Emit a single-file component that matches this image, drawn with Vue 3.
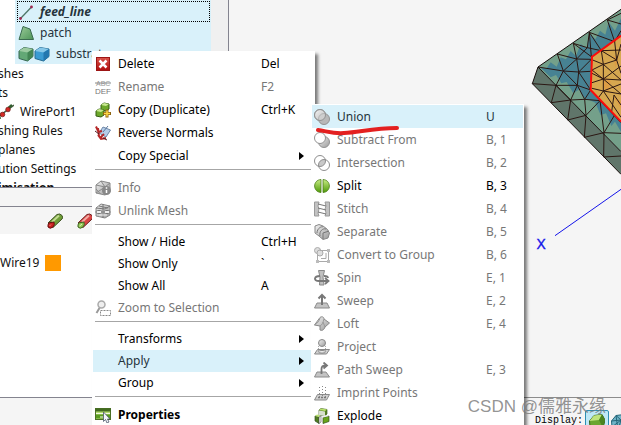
<script setup>
import { ref } from 'vue'

const treeNodes = [
    { id: 1, text: 'feed_line', icons: ['wire'], current: true },
    { id: 2, text: 'patch', icons: ['face'] },
    { id: 3, text: 'substrate', icons: ['cube-green', 'cube-blue'] },
]

const treeGroups = [
    { id: 1, text: 'shes' },
    { id: 2, text: 'ts' },
    { id: 3, text: 'WirePort1', icon: 'port' },
    { id: 4, text: 'shing Rules' },
    { id: 5, text: 'planes' },
    { id: 6, text: 'ution Settings' },
    { id: 7, text: 'imisation', bold: true },
]

const menuGroups = [
    [
        { text: 'Delete', key: 'Del', icon: 'delete' },
        { text: 'Rename', key: 'F2', icon: 'rename', disabled: true },
        { text: 'Copy (Duplicate)', key: 'Ctrl+K', icon: 'copy' },
        { text: 'Reverse Normals', icon: 'reverse' },
        { text: 'Copy Special', sub: true },
    ],
    [
        { text: 'Info', icon: 'info', disabled: true },
        { text: 'Unlink Mesh', icon: 'mesh', disabled: true },
    ],
    [
        { text: 'Show / Hide', key: 'Ctrl+H', low: true },
        { text: 'Show Only', key: '`', low: true },
        { text: 'Show All', key: 'A', low: true },
        { text: 'Zoom to Selection', icon: 'zoom', disabled: true, low: true },
    ],
    [
        { text: 'Transforms', sub: true, low: true },
        { text: 'Apply', sub: true, low: true },
        { text: 'Group', sub: true, low: true },
    ],
    [
        { text: 'Properties', icon: 'properties', bold: true },
    ],
]

const applyItems = [
    { text: 'Union', key: 'U', icon: 'union' },
    { text: 'Subtract From', key: 'B, 1', icon: 'subtract', disabled: true },
    { text: 'Intersection', key: 'B, 2', icon: 'intersection', disabled: true },
    { text: 'Split', key: 'B, 3', icon: 'split' },
    { text: 'Stitch', key: 'B, 4', icon: 'stitch', disabled: true },
    { text: 'Separate', key: 'B, 5', icon: 'separate', disabled: true },
    { text: 'Convert to Group', key: 'B, 6', icon: 'convert', disabled: true },
    { text: 'Spin', key: 'E, 1', icon: 'spin', disabled: true },
    { text: 'Sweep', key: 'E, 2', icon: 'sweep', disabled: true },
    { text: 'Loft', key: 'E, 4', icon: 'loft', disabled: true },
    { text: 'Project', icon: 'project', disabled: true },
    { text: 'Path Sweep', key: 'E, 3', icon: 'pathsweep', disabled: true },
    { text: 'Imprint Points', icon: 'imprint', disabled: true },
    { text: 'Explode', icon: 'explode' },
]

const openItem = ref('Apply')
const activeItem = ref('Union')
</script>

<template>
    <div class="app">
        <svg class="symbols" width="0" height="0" aria-hidden="true">
            <defs>
                <linearGradient id="g-gray" x1="0" y1="0" x2="1" y2="1">
                    <stop offset="0" stop-color="#f2f2f2" /><stop offset="1" stop-color="#9a9a9a" />
                </linearGradient>
                <linearGradient id="g-green" x1="0" y1="0" x2="0" y2="1">
                    <stop offset="0" stop-color="#c8ec84" /><stop offset="1" stop-color="#4f9a08" />
                </linearGradient>
                <linearGradient id="g-red" x1="0" y1="0" x2="0" y2="1">
                    <stop offset="0" stop-color="#d9534a" /><stop offset="1" stop-color="#b00d0d" />
                </linearGradient>
                <linearGradient id="g-face" x1="0" y1="0" x2="1" y2="1">
                    <stop offset="0" stop-color="#9ccc9a" /><stop offset="1" stop-color="#4c9458" />
                </linearGradient>
            </defs>

            <symbol id="i-wire" viewBox="0 0 16 16">
                <path d="M2.5 14.5 13.5 3" stroke="#4d7668" stroke-width="1.3" />
                <circle cx="2.5" cy="14.5" r="1.4" fill="#a02850" /><circle cx="13.5" cy="3" r="1.4" fill="#a02850" />
            </symbol>
            <symbol id="i-face" viewBox="0 0 16 16">
                <path d="M5 1.5 12 4 15.5 14.5H1Z" fill="url(#g-face)" stroke="#3b6b50" stroke-linejoin="round" />
            </symbol>
            <symbol id="i-cube-green" viewBox="0 0 16 16">
                <path d="M1 5 6 1.5 15 3V10.5L9.5 15 1 12.5Z" fill="#63a876" stroke="#356650" stroke-linejoin="round" />
                <path d="M1 5 6 1.5 15 3 9.5 6.5Z" fill="#9ccba2" /><path d="M9.5 6.5 15 3V10.5L9.5 15Z" fill="#438554" />
            </symbol>
            <symbol id="i-cube-blue" viewBox="0 0 16 16">
                <path d="M1 5 6 1.5 15 3V10.5L9.5 15 1 12.5Z" fill="#3a9bd2" stroke="#276b91" stroke-linejoin="round" />
                <path d="M1 5 6 1.5 15 3 9.5 6.5Z" fill="#86c7e8" /><path d="M9.5 6.5 15 3V10.5L9.5 15Z" fill="#2277af" />
            </symbol>
            <symbol id="i-port" viewBox="0 0 16 16">
                <path d="M0 13 16 1" stroke="#4c6046" stroke-width="1.5" />
                <path d="M0 10 2 15M10.5 4 14 1" stroke="#315e2e" stroke-width="2.5" />
                <circle cx="4.5" cy="10.5" r="2.3" fill="#d32a24" stroke="#6d1515" stroke-width=".7" />
                <circle cx="10" cy="5.5" r="2.3" fill="#d32a24" stroke="#6d1515" stroke-width=".7" />
            </symbol>

            <symbol id="i-delete" viewBox="0 0 16 16">
                <rect x="1.5" y="1.5" width="13" height="13" fill="url(#g-red)" stroke="#9c1515" />
                <path d="M4.5 4.5 11.5 11.5M11.5 4.5 4.5 11.5" stroke="#fff" stroke-width="2.5" />
            </symbol>
            <symbol id="i-rename" viewBox="0 0 16 16">
                <text x="1" y="6.5" font-size="7" fill="#999" font-family="Liberation Sans">ABC</text>
                <path d="M0 4H16" stroke="#888" />
                <text x="0" y="15" font-size="8" fill="#777" font-family="Liberation Sans">DEF</text>
            </symbol>
            <symbol id="i-copy" viewBox="0 0 16 16">
                <path d="M6 3 9 1 14 2V7L11 9 6 8Z" fill="#6da82b" stroke="#355e13" />
                <path d="M6 3 9 1 14 2 11 4Z" fill="#c9e991" />
                <path d="M1 9 4 7 9 8V13L6 15 1 14Z" fill="#6da82b" stroke="#355e13" />
                <path d="M1 9 4 7 9 8 6 10Z" fill="#c9e991" />
                <path d="M12 7.5V15.5M8 11.5H16" stroke="#8d6511" stroke-width="3" /><path d="M12 8.5V14.5M9 11.5H15" stroke="#ffd747" stroke-width="1.5" />
            </symbol>
            <symbol id="i-reverse" viewBox="0 0 16 16">
                <path d="M8 2 15.5 5 11 12 4 8Z" fill="#b4cce8" stroke="#6d87a8" />
                <path d="M8 7 13 1" stroke="#5c789c" />
                <path d="M1 1.5 3.500 7 7 6M3 3 4 11M9 9 5 13M3 10 6 14 11 13" fill="none" stroke="#b52828" stroke-width="2" />
                <path d="M0 6 4 9M8 13 12 15" stroke="#4d1b22" />
            </symbol>
            <symbol id="i-info" viewBox="0 0 16 16">
                <path d="M1 5 6 1 15 3V12L10 15 1 13Z" fill="url(#g-gray)" stroke="#888" />
                <path d="M1 5 10 7 15 3M10 7V15M1 13 10 7M6 1 10 7M1 9 5.5 14" fill="none" stroke="#888" />
                <circle cx="11.5" cy="10.5" r="4.5" fill="#888" />
                <path d="M11.5 10V13M11.5 7.3V8.8" stroke="#fff" stroke-width="1.5" />
            </symbol>
            <symbol id="i-mesh" viewBox="0 0 16 16">
                <path d="M1 5 6 1 15 3V12L10 15 1 13Z" fill="url(#g-gray)" stroke="#888" />
                <path d="M1 5 10 6 15 3M8 1 8 15M4 3 13 5" fill="none" stroke="#777" />
                <rect x="1" y="7.5" width="6" height="3" rx="1.5" fill="#eee" stroke="#777" />
                <rect x="9" y="7.5" width="6" height="3" rx="1.5" fill="#eee" stroke="#777" />
                <path d="M4 12H12" stroke="#eee" />
            </symbol>
            <symbol id="i-zoom" viewBox="0 0 16 16">
                <circle cx="6.5" cy="4.5" r="3.5" fill="#eee" stroke="#aaa" stroke-width="1.5" />
                <path d="M4.5 8 1.5 13" stroke="#999" stroke-width="2" />
                <rect x="5.5" y="10.5" width="10" height="5" fill="none" stroke="#888" stroke-dasharray="2 1" />
            </symbol>
            <symbol id="i-properties" viewBox="0 0 16 16">
                <rect x=".5" y="1.5" width="15" height="11" fill="#b4dc70" stroke="#4c7026" />
                <path d="M0 3H16" stroke="#426b20" stroke-width="3" /><path d="M1 9.5H15" stroke="#5a9b20" stroke-width="4" />
                <path d="M1 6.5H15M5 10H10" stroke="#f2fae3" />
                <path d="M8.5 5 15 12H12.5L14 15 12 16 10.5 12.5 8.5 14.5Z" fill="#f2f5fb" stroke="#4d586c" stroke-width=".8" />
            </symbol>

            <symbol id="i-union" viewBox="0 0 16 16">
                <circle cx="6" cy="6" r="5.5" fill="url(#g-gray)" stroke="#929292" />
                <circle cx="10" cy="10" r="5.5" fill="#b8b8b8" stroke="#929292" />
                <circle cx="6" cy="6" r="5.5" fill="#f5f5f5" fill-opacity=".35" stroke="#929292" />
            </symbol>
            <symbol id="i-subtract" viewBox="0 0 16 16">
                <circle cx="10" cy="10" r="5.5" fill="url(#g-gray)" stroke="#929292" />
                <circle cx="6" cy="6" r="5.5" fill="#fff" stroke="#929292" />
            </symbol>
            <symbol id="i-intersection" viewBox="0 0 16 16">
                <path d="M4.7 11.3A5.5 5.5 0 0 1 11.3 4.7 5.5 5.5 0 0 1 4.7 11.3Z" fill="#c8c8c8" />
                <circle cx="6" cy="6" r="5.5" fill="none" stroke="#8e8e8e" /><circle cx="10" cy="10" r="5.5" fill="none" stroke="#8e8e8e" />
            </symbol>
            <symbol id="i-split" viewBox="0 0 16 16">
                <path d="M7 1.500C-1.500 2-1.500 14 7 14.500ZM9 1.500C17.500 2 17.500 14 9 14.500Z" fill="url(#g-green)" stroke="#497c18" stroke-width=".8" />
            </symbol>
            <symbol id="i-stitch" viewBox="0 0 16 16">
                <path d="M.5 1H5L4 5 5 8 4 12 5 15H.5ZM15.5 1H11L12 5 11 8 12 12 11 15H15.5Z" fill="#c2c2c2" stroke="#9a9a9a" />
                <path d="M4 3 12 5M4 7 12 9M4 11 12 13" stroke="#777" />
            </symbol>
            <symbol id="i-separate" viewBox="0 0 16 16">
                <path d="M1 2 5 .5 9 2 13 5 15.5 9 14 14 9 15.5 5 12 1 9Z" fill="url(#g-gray)" stroke="#888" stroke-linejoin="round" />
                <path d="M3 9C3 4 8 2 9 3M6 12C5 7 9 4 12 5M9 15V9L15 7" fill="none" stroke="#777" />
            </symbol>
            <symbol id="i-convert" viewBox="0 0 16 16">
                <circle cx="3.5" cy="3.5" r="3" fill="#ddd" stroke="#aaa" /><circle cx="6" cy="6" r="3" fill="#ddd" stroke="#aaa" />
                <path d="M6 3.5H14.5V14.5H3.5V8M7 11.5H12V6" fill="none" stroke="#aaa" />
                <path d="M13 2h3v3h-3zM13 13h3v3h-3zM2 13h3v3H2z" fill="#bbb" />
            </symbol>
            <symbol id="i-spin" viewBox="0 0 16 16">
                <path d="M4.5 .5H10.5L9 7 10 15H5.5L6 7Z" fill="#c0c0c0" stroke="#888" />
                <path d="M6 6C0 6-1 11 5 11H14M11 8 14.5 11 11 14M10 6C13 6 14 7 14 8" fill="none" stroke="#777" stroke-width="1.8" />
            </symbol>
            <symbol id="i-sweep" viewBox="0 0 16 16">
                <path d="M3 10H13L15.5 15H.5Z" fill="#c4c4c4" stroke="#8a8a8a" />
                <path d="M8 12V2M4.5 5.5 8 2 11.5 5.5" fill="none" stroke="#777" stroke-width="2" />
            </symbol>
            <symbol id="i-loft" viewBox="0 0 16 16">
                <path d="M6 1.5C8 0 10 1 10 3L15.5 7 11 11C10 14 8 15 6 14L6 10 .5 9Z" fill="url(#g-gray)" stroke="#888" />
                <path d="M6 2C5 5 4 7 .5 9M10 3C9 7 8 9 6 10M11 11 9 6" fill="none" stroke="#999" />
            </symbol>
            <symbol id="i-project" viewBox="0 0 16 16">
                <circle cx="8" cy="4" r="3.5" fill="url(#g-gray)" stroke="#888" />
                <path d="M3.5 10.5H15.5L12.5 15H.5Z" fill="#d0d0d0" stroke="#888" /><ellipse cx="8" cy="12.8" rx="3.5" ry="1.3" fill="#eee" stroke="#888" />
                <path d="M4.5 7V12M11.5 7V12" stroke="#aaa" stroke-dasharray="1 1" />
            </symbol>
            <symbol id="i-pathsweep" viewBox="0 0 16 16">
                <path d="M3 10H12L15.5 15H.5Z" fill="#c4c4c4" stroke="#8a8a8a" />
                <path d="M7.5 12V7Q7.5 3.5 12 3.5M9.5 .5 13 3.5 9.5 6.5" fill="none" stroke="#777" stroke-width="1.8" />
            </symbol>
            <symbol id="i-imprint" viewBox="0 0 16 16">
                <path d="M3.5 9.5H15.5L12.5 15H.5Z" fill="#d0d0d0" stroke="#8a8a8a" />
                <path d="M5.5 2V13M8.5 1V12M11.5 2V13" stroke="#888" stroke-dasharray="1 2" />
                <path d="M4 12.5H12" stroke="#777" stroke-width="1.5" stroke-dasharray="2 1" />
            </symbol>
            <symbol id="i-explode" viewBox="0 0 16 16">
                <path d="M5 2 7 .5 13 1.5V6L11 8 5 7Z" fill="#55801f" stroke="#42602b" stroke-width=".7" />
                <path d="M5 2 7 .5 13 1.5 11 3Z" fill="#b8e06d" /><path d="M5 2.5 11 3.5V8L5 7Z" fill="#d7dfce" />
                <path d="M1 8 5 9V15.5L1 13Z" fill="#4f7d20" stroke="#344e20" stroke-width=".7" />
                <path d="M1 8 3 6.5 7 8 5 9Z" fill="#b8e06d" /><path d="M5 9 7 8V14L5 15.5Z" fill="#f4f4f4" stroke="#555" stroke-width=".6" />
                <path d="M9 9.5 15 8V13.5L9 15.5Z" fill="#68a51b" stroke="#344e20" stroke-width=".7" />
                <path d="M8 8 13 7 15 8 9 9.5Z" fill="#eee" />
            </symbol>

            <symbol id="i-tube-green" viewBox="0 0 16 16">
                <path d="M1 10 10 1.5Q13 0 15 2.5T14 7L6 14.5Z" fill="#6f9e38" stroke="#3f5423" />
                <path d="M5 9 12 2.5" stroke="#c2dc91" stroke-width="2" />
                <path d="M1 12Q1 9 4 9.5L7 9Q8 12 6 14 3 16.5 1 14Z" fill="#c92020" stroke="#651010" /><path d="M2.5 13 4 11.5" stroke="#f28c7c" />
            </symbol>
            <symbol id="i-tube-red" viewBox="0 0 16 16">
                <path d="M1 10 10 1.5Q13 0 15 2.5T14 7L6 14.5Z" fill="#d94444" stroke="#702020" />
                <path d="M5 9 12 2.5" stroke="#f4aaa3" stroke-width="2" />
                <path d="M1 12Q1 9 4 9.5L7 9Q8 12 6 14 3 16.5 1 14Z" fill="#8fc450" stroke="#3f6322" /><path d="M2.5 13 5 11" stroke="#dff5bc" />
            </symbol>
            <symbol id="i-solid" viewBox="0 0 16 16">
                <path d="M5 1.5 13 .5 16 6 14 14 7 16 1 13 .5 7Z" fill="#6ba62f" stroke="#35601c" />
                <path d="M5 1.5 13 .5 10 6 .5 7Z" fill="#bfe47c" /><path d="M10 6 13 .5 16 6 14 14Z" fill="#4a8420" />
            </symbol>
            <symbol id="i-wireframe" viewBox="0 0 16 16">
                <path d="M5 1.5 13 .5 16 6 14 14 7 16 1 13 .5 7Z" fill="#70b5c8" stroke="#246579" />
                <path d="M5 1.5 10 6 .5 7M13 .5 10 6 7 16M1 13 10 6 14 14M16 6H10M5 1.5 7 16" fill="none" stroke="#246579" />
            </symbol>
        </svg>

        <aside class="side">
            <div class="tree">
                <div class="selection">
                    <div v-for="node in treeNodes" :key="node.id" class="node" :class="{ current: node.current }">
                        <svg v-for="icon in node.icons" :key="icon" class="icon"><use :href="'#i-' + icon" /></svg>
                        <span class="node-text">{{ node.text }}</span>
                    </div>
                </div>
                <div v-for="group in treeGroups" :key="group.id" class="group" :class="{ bold: group.bold }">
                    <svg v-if="group.icon" class="icon"><use :href="'#i-' + group.icon" /></svg>
                    <span>{{ group.text }}</span>
                </div>
            </div>
            <div class="splitter"></div>
            <div class="tools">
                <button class="tool" aria-label="Front medium"><svg class="icon"><use href="#i-tube-green" /></svg></button>
                <button class="tool" aria-label="Back medium"><svg class="icon"><use href="#i-tube-red" /></svg></button>
            </div>
            <div class="details">
                <span>Wire19</span>
                <span class="swatch"></span>
            </div>
            <div class="footer"></div>
        </aside>

        <main class="view">
            <div class="scene">
                <svg class="model" viewBox="0 0 603 810">
                    <path d="M354 201 603 28V455Z" fill="#74a08a" />
                    <path d="M362 203 380 205 392 187 410 200 422 172 438 178 452 153 468 168 482 132 500 145 508 100 526 118 540 92 556 104 566 66 585 92 603 55V395L585 365 574 378 558 340 542 345 526 308 508 300 490 292 478 268 460 280 440 246 424 250 408 225 392 232Z" fill="#478293" />
                    <path d="M354 201 603 455V523L337 251Z" fill="#60756a" />
                    <path d="M603 107 516 170 512 270 603 365Z" fill="#d6a850" />
                    <path d="M553 230 572 244 565 278 550 262ZM580 165 594 178 586 204ZM580 290 603 305V325Z" fill="#dd9d45" />
                    <g fill="none" stroke="#2b1713" stroke-width="3">
                        <path d="M354 201 430 213 470 177 412 162 430 213 408 256 472 256 476 216 430 213 472 256 512 270 476 216 512 214M470 177 460 130 502 143 470 177 514 178 476 216 470 177M460 130 514 170 508 97 502 143 544 152 508 97 584 125 562 60 603 72M562 60 603 40M603 92 584 125M408 256 452 300 472 256 494 298 452 300M498 346 494 298 512 270M494 298 540 302M498 346 540 302 552 398M540 302 603 368M552 398 603 400M552 398 584 345" />
                        <path d="M337 251 408 256 394 308 452 300 443 360 498 346 493 412 552 398 551 471 603 468" />
                        <path d="M544 152 550 193 550 237 550 273 516 265M518 180 550 193 516 210 550 237 516 220M516 248 550 237 603 198M544 152 590 180 550 193 603 240 550 237 603 282 550 273 603 252M550 273 603 352M550 273 536 292M584 125 590 180 603 132M590 180 603 220M544 152 603 150M575 335 582 285 603 315" />
                    </g>
                    <path d="M603 28 354 201 337 251 603 523M354 201 603 455" fill="none" stroke="#170d0b" stroke-width="3" />
                    <path d="M603 107 516 170 512 270 603 365" fill="none" stroke="#fa0c0c" stroke-width="6" />
                    <path d="M405 707 603 568" stroke="#1414ea" stroke-width="3" />
                    <text x="350" y="747" class="axis">X</text>
                </svg>
            </div>
            <div class="display">
                <span>Display:</span>
                <button class="mode on" aria-label="Solid"><svg class="icon"><use href="#i-solid" /></svg></button>
                <button class="mode" aria-label="Wireframe"><svg class="icon"><use href="#i-wireframe" /></svg></button>
            </div>
        </main>

        <div class="menu context" role="menu">
            <div v-for="(items, i) in menuGroups" :key="i" class="section">
                <button
                    v-for="item in items"
                    :key="item.text"
                    class="item"
                    role="menuitem"
                    :class="{ low: item.low, bold: item.bold, active: item.text === openItem }"
                    :disabled="item.disabled"
                    @click="openItem = item.text"
                >
                    <span class="slot"><svg v-if="item.icon" class="icon"><use :href="'#i-' + item.icon" /></svg></span>
                    <span class="label">{{ item.text }}</span>
                    <span class="key">{{ item.key }}</span>
                    <span v-if="item.sub" class="arrow"></span>
                </button>
            </div>
        </div>

        <div v-if="openItem === 'Apply'" class="menu apply" role="menu">
            <button
                v-for="item in applyItems"
                :key="item.text"
                class="item"
                role="menuitem"
                :class="{ active: item.text === activeItem }"
                :disabled="item.disabled"
                @click="activeItem = item.text"
            >
                <span class="slot"><svg class="icon"><use :href="'#i-' + item.icon" /></svg></span>
                <span class="label">{{ item.text }}</span>
                <span class="key">{{ item.key }}</span>
            </button>
        </div>

        <svg class="marker" viewBox="0 0 84 12" aria-hidden="true">
            <path d="M2 6C10 7 18 10 28 9 44 8 58 4 81 4" />
        </svg>
        <div class="watermark">CSDN @儒雅永缘</div>
    </div>
</template>

<style>
    body {
        overflow: hidden;
        background-color: #f5f5f5;
    }
</style>

<style scoped>
    .app {
        position: relative;
        display: flex;
        height: 100vh;
        overflow: hidden;
        font-family: "Noto Sans", "Noto Sans CJK SC", sans-serif;
        font-size: 12px;
        line-height: 18px;
        color: #111;
    }
    .symbols {
        position: absolute;
    }
    .icon {
        display: block;
        width: 16px;
        height: 16px;
        flex: none;
    }
    button {
        font: inherit;
        color: inherit;
        border: none;
        background: none;
        padding: 0;
    }

    .side {
        display: flex;
        flex-direction: column;
        flex: none;
        width: 228px;
        border-right: 1px solid #84848f;
        background-color: #fff;
    }
    .tree {
        height: 187px;
        overflow: hidden;
        border-right: 17px solid #f0f0f0;
        white-space: nowrap;
    }
    .selection {
        margin-left: 15px;
        padding-top: 1px;
        background-color: #d9f1fa;
        color: #26343c;
    }
    .node {
        display: flex;
        align-items: center;
        height: 21px;
        padding-left: 3px;
    }
    .node.current {
        height: 19px;
        margin: 0 1px 0 2px;
        padding-left: 0;
        border: 1px dotted #000;
        font-weight: bold;
        font-style: italic;
    }
    .node-text {
        margin-left: 6px;
    }
    .group {
        display: flex;
        align-items: center;
        gap: 6px;
        height: 19px;
        margin-left: -2px;
    }
    .group.bold {
        font-weight: bold;
    }
    .splitter {
        height: 18px;
        border-top: 1px solid #84848f;
        border-bottom: 1px solid #84848f;
        background-color: #f5f5f5;
    }
    .tools {
        display: flex;
        align-items: center;
        gap: 14px;
        height: 27px;
        padding-left: 47px;
        background-color: #f5f5f5;
    }
    .details {
        display: flex;
        flex: 1;
        gap: 6px;
        padding-top: 21px;
        line-height: 16px;
    }
    .swatch {
        width: 16px;
        height: 16px;
        background-color: #ff9900;
    }
    .footer {
        height: 27px;
        border-top: 1px solid #84848f;
        background-color: #f5f5f5;
    }

    .view {
        display: flex;
        flex-direction: column;
        flex: 1;
        min-width: 0;
        background-color: #f5f5f5;
    }
    .scene {
        display: flex;
        flex: 1;
        justify-content: flex-end;
        align-items: flex-start;
    }
    .model {
        width: 201px;
        height: 270px;
    }
    .axis {
        font-family: "Noto Sans", sans-serif;
        font-size: 45px;
        fill: #1414ea;
        stroke: #1414ea;
    }
    .display {
        display: flex;
        justify-content: flex-end;
        gap: 2px;
        height: 15px;
        padding-top: 12px;
        border-top: 1px solid #8c8c8c;
        font-family: "Liberation Mono", monospace;
        font-size: 10px;
        line-height: 22px;
        color: #000;
        overflow: hidden;
    }
    .mode {
        display: flex;
        align-items: center;
        justify-content: flex-start;
        width: 10px;
        height: 24px;
    }
    .mode.on {
        justify-content: center;
        width: 24px;
        border: 1px solid #2f8fb4;
        border-radius: 2px;
        background-color: #bfe8f6;
    }

    .menu {
        position: absolute;
        background-color: #fff;
        box-shadow: 3px 3px 3px rgba(0, 0, 0, 0.5);
        color: #000;
    }
    .context {
        left: 92px;
        top: 51px;
        width: 221px;
        padding: 1px;
    }
    .apply {
        left: 311px;
        top: 104px;
        width: 211px;
        padding: 1px;
    }
    .section + .section::before {
        content: "";
        display: block;
        margin: 2px 1px 6px 2px;
        border-top: 1px solid #a6a6a6;
    }
    .item {
        display: flex;
        align-items: center;
        position: relative;
        width: 100%;
        height: 23px;
        padding-left: 2px;
        text-align: left;
        white-space: nowrap;
    }
    .item.low {
        height: 22px;
    }
    .item.bold {
        font-weight: bold;
    }
    .item.active {
        background-color: #d9f1fa;
        color: #26343c;
    }
    .item:disabled {
        color: #777;
    }
    .slot {
        width: 23px;
        flex: none;
    }
    .label {
        flex: 1;
    }
    .key {
        width: 53px;
    }
    .apply .key {
        width: 37px;
    }
    .arrow {
        position: absolute;
        right: 10px;
        border: 4px solid transparent;
        border-left: 5px solid #000;
        border-right: none;
    }

    .marker {
        position: absolute;
        left: 316px;
        top: 124px;
        width: 84px;
        height: 12px;
    }
    .marker path {
        fill: none;
        stroke: #e32020;
        stroke-width: 4;
        stroke-linecap: round;
    }
    .watermark {
        position: absolute;
        right: 15px;
        bottom: 6px;
        font-family: "Liberation Sans", "Noto Sans CJK SC", sans-serif;
        font-size: 17px;
        line-height: 24px;
        color: rgba(120, 120, 120, 0.8);
        pointer-events: none;
    }
</style>
